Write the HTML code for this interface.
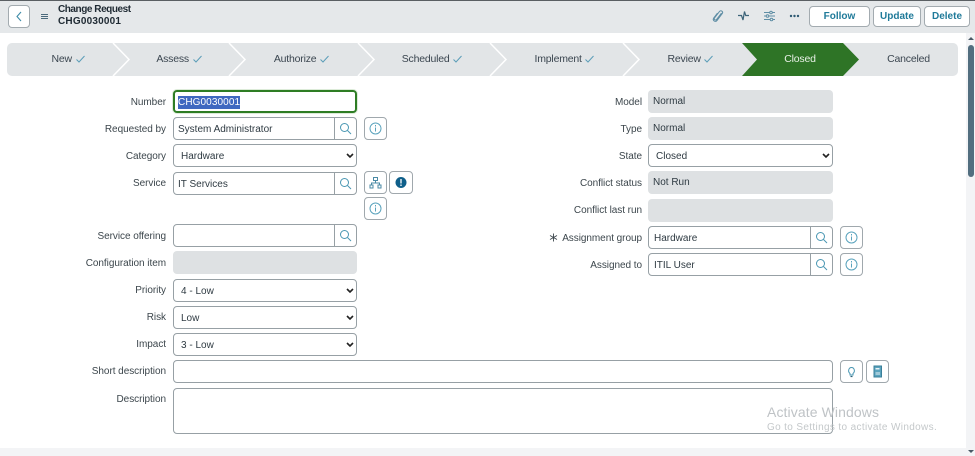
<!DOCTYPE html>
<html><head><meta charset="utf-8"><style>
html,body{margin:0;padding:0;background:#fff}
#p{position:relative;width:975px;height:456px;overflow:hidden;background:#fff;font-family:"Liberation Sans",sans-serif;font-size:10px;color:#2e3a42}
#p div,#p svg{position:absolute;box-sizing:border-box}
#p svg.c{position:static;vertical-align:-1px;margin-left:1px}
.l{text-align:right;line-height:16px;height:14px;white-space:nowrap;color:#3c464c;letter-spacing:-.05px}
.f{border:1px solid #97a0a5;border-radius:4px;height:23px;background:#fff;line-height:23px;padding-left:4px;white-space:nowrap;color:#2e3a42}
.r{background:#dee1e3;border:0;border-radius:4px;height:23px;line-height:23px;padding-left:5px;color:#2e3a42}
.s{padding-left:7px}
.b{border:1px solid #a0a8ad;border-radius:4px;width:23px;height:23px;background:#fff}
.st{top:43px;height:33px;line-height:33px;text-align:center;color:#3b4650;white-space:nowrap;font-size:10.500px;letter-spacing:-.2px}
.h{top:6px;height:21px;background:#fff;border:1px solid #a3abb0;border-radius:4px;color:#1f7a99;font-weight:bold;text-align:center;line-height:20px;font-size:10px}
</style></head><body><div id="p">
<div style="left:0;top:0;width:975px;height:33px;background:#e5e8ea"></div>
<div style="left:0;top:0;width:975px;height:1px;background:#5a5f63"></div>
<div style="left:8px;top:5px;width:22px;height:23px;background:#fff;border:1px solid #a3abb0;border-radius:4px"></div>
<svg style="left:8px;top:5px" width="22" height="23" fill="none" stroke="#3f8ca8" stroke-width="1.100"><path d="M13 7l-4 4.500 4 4.500"/></svg>
<svg style="left:40px;top:13px" width="9" height="7" fill="none" stroke="#4b6a7c"><path d="M1 1.500h7M1 3.500h7M1 5.500h7"/></svg>
<div style="left:58px;top:4px;font-weight:bold;font-size:10px;line-height:11.500px;color:#1f2a33;white-space:nowrap"><span style="letter-spacing:-.45px">Change Request</span><br><span style="letter-spacing:.2px">CHG0030001</span></div>

<svg style="left:711px;top:9px" width="13" height="14" fill="none" stroke="#5f8ea5" stroke-width="1"><path d="M10.500 4L5.500 10.500c-1 1.200-3 0-2-1.500L8.500 2.500c1.500-1.700 4 .2 2.800 2L6 11.500c-1.700 2-4.800 0-3.300-2.500L6.500 4"/></svg>
<svg style="left:737px;top:10px" width="13" height="12" fill="none" stroke="#3d6479" stroke-width="1.200"><path d="M1 5.500h3.500L6 10l1.500-8.500L8.700 5.500H12"/></svg>
<svg style="left:763px;top:10px" width="13" height="12" fill="none" stroke="#5f8ea5"><path d="M1 2.500h11M1 6h11M1 9.500h11"/><circle cx="8" cy="2.500" r="1.300" fill="#e5e8ea"/><circle cx="4.500" cy="6" r="1.300" fill="#e5e8ea"/><circle cx="8.500" cy="9.500" r="1.300" fill="#e5e8ea"/></svg>
<svg style="left:789px;top:14px" width="11" height="4" fill="#2f5a73"><circle cx="2" cy="2" r="1.200"/><circle cx="5.500" cy="2" r="1.200"/><circle cx="9" cy="2" r="1.200"/></svg>
<div class="h" style="left:809px;width:61px">Follow</div>
<div class="h" style="left:873px;width:48px">Update</div>
<div class="h" style="left:924px;width:46px">Delete</div>

<div style="left:7px;top:43px;width:951px;height:33px;background:#e2e5e7;border-radius:5px"></div>
<svg style="left:0;top:43px" width="975" height="33" fill="none" stroke="#fff" stroke-width="1.500"><path d="M113 0l16 16.500-16 16.500M229 0l16 16.500-16 16.500M358 0l16 16.500-16 16.500M490 0l16 16.500-16 16.500M623 0l16 16.500-16 16.500"/><path d="M742 0H843L859 16.500 843 33H742L757 16.500Z" fill="#2e7426" stroke="none"/></svg>
<div class="st" style="left:7px;width:122px">New <svg class="c" width="9" height="8" fill="none" stroke="#5b9db8"><path d="M.5 4.500l2.500 2.500 5.500-6"/></svg></div>
<div class="st" style="left:129px;width:100px">Assess <svg class="c" width="9" height="8" fill="none" stroke="#5b9db8"><path d="M.5 4.500l2.500 2.500 5.500-6"/></svg></div>
<div class="st" style="left:245px;width:113px">Authorize <svg class="c" width="9" height="8" fill="none" stroke="#5b9db8"><path d="M.5 4.500l2.500 2.500 5.500-6"/></svg></div>
<div class="st" style="left:374px;width:116px">Scheduled <svg class="c" width="9" height="8" fill="none" stroke="#5b9db8"><path d="M.5 4.500l2.500 2.500 5.500-6"/></svg></div>
<div class="st" style="left:506px;width:117px">Implement <svg class="c" width="9" height="8" fill="none" stroke="#5b9db8"><path d="M.5 4.500l2.500 2.500 5.500-6"/></svg></div>
<div class="st" style="left:639px;width:103px">Review <svg class="c" width="9" height="8" fill="none" stroke="#5b9db8"><path d="M.5 4.500l2.500 2.500 5.500-6"/></svg></div>
<div class="st" style="left:757px;width:86px;color:#e8f0e6">Closed</div>
<div class="st" style="left:859px;width:99px">Canceled</div>

<div class="l" style="left:60px;width:106px;top:95px">Number</div>
<div class="l" style="left:60px;width:106px;top:122px">Requested by</div>
<div class="l" style="left:60px;width:106px;top:149px">Category</div>
<div class="l" style="left:60px;width:106px;top:176px">Service</div>
<div class="l" style="left:60px;width:106px;top:229px">Service offering</div>
<div class="l" style="left:60px;width:106px;top:256px">Configuration item</div>
<div class="l" style="left:60px;width:106px;top:283px">Priority</div>
<div class="l" style="left:60px;width:106px;top:310px">Risk</div>
<div class="l" style="left:60px;width:106px;top:337px">Impact</div>
<div class="l" style="left:60px;width:106px;top:364px">Short description</div>
<div class="l" style="left:60px;width:106px;top:392px">Description</div>

<div style="left:172px;top:89px;width:186px;height:25px;border:1px solid #dcebd8;border-radius:5px"></div>
<div class="f" style="left:173px;top:90px;width:184px;border:2px solid #2e7d24;line-height:21px;padding-left:3px"><span style="background:#3f68c0;color:#fff;padding:1px 0;letter-spacing:.1px">CHG0030001</span></div>
<div class="f" style="left:173px;top:117px;width:184px">System Administrator</div>
<div class="f s" style="left:173px;top:144px;width:184px">Hardware</div>
<div class="f" style="left:173px;top:172px;width:184px">IT Services</div>
<div class="f" style="left:173px;top:224px;width:184px"></div>
<div class="r" style="left:173px;top:251px;width:184px"></div>
<div class="f s" style="left:173px;top:279px;width:184px">4 - Low</div>
<div class="f s" style="left:173px;top:306px;width:184px">Low</div>
<div class="f s" style="left:173px;top:333px;width:184px">3 - Low</div>
<div class="f" style="left:173px;top:360px;width:660px"></div>
<div class="f" style="left:173px;top:388px;width:660px;height:46px"></div>

<div class="l" style="left:530px;width:112px;top:95px">Model</div>
<div class="l" style="left:530px;width:112px;top:122px">Type</div>
<div class="l" style="left:530px;width:112px;top:149px">State</div>
<div class="l" style="left:530px;width:112px;top:176px">Conflict status</div>
<div class="l" style="left:530px;width:112px;top:203px">Conflict last run</div>
<div class="l" style="left:530px;width:112px;top:231px">Assignment group</div>
<div class="l" style="left:530px;width:112px;top:258px">Assigned to</div>
<svg style="left:549px;top:233px" width="9" height="9" fill="none" stroke="#3c464c" stroke-width=".9"><path d="M4.500 .5v8M1 2.500l7 4M8 2.500l-7 4"/></svg>

<div class="r" style="left:648px;top:90px;width:185px">Normal</div>
<div class="r" style="left:648px;top:117px;width:185px">Normal</div>
<div class="f s" style="left:648px;top:144px;width:185px">Closed</div>
<div class="r" style="left:648px;top:171px;width:185px">Not Run</div>
<div class="r" style="left:648px;top:199px;width:185px"></div>
<div class="f" style="left:648px;top:226px;width:185px;padding-left:5px">Hardware</div>
<div class="f" style="left:648px;top:253px;width:185px;padding-left:5px">ITIL User</div>

<div style="left:334px;top:117px;width:1px;height:23px;background:#97a0a5"></div>
<div style="left:334px;top:172px;width:1px;height:23px;background:#97a0a5"></div>
<div style="left:334px;top:224px;width:1px;height:23px;background:#97a0a5"></div>
<div style="left:810px;top:226px;width:1px;height:23px;background:#97a0a5"></div>
<div style="left:810px;top:253px;width:1px;height:23px;background:#97a0a5"></div>

<svg style="left:339px;top:122px" width="13" height="13" fill="none" stroke="#4a97b3" stroke-width="1"><circle cx="5.500" cy="5.500" r="4"/><path d="M8.500 8.500L12 12"/></svg>
<svg style="left:339px;top:177px" width="13" height="13" fill="none" stroke="#4a97b3" stroke-width="1"><circle cx="5.500" cy="5.500" r="4"/><path d="M8.500 8.500L12 12"/></svg>
<svg style="left:339px;top:229px" width="13" height="13" fill="none" stroke="#4a97b3" stroke-width="1"><circle cx="5.500" cy="5.500" r="4"/><path d="M8.500 8.500L12 12"/></svg>
<svg style="left:815px;top:231px" width="13" height="13" fill="none" stroke="#4a97b3" stroke-width="1"><circle cx="5.500" cy="5.500" r="4"/><path d="M8.500 8.500L12 12"/></svg>
<svg style="left:815px;top:258px" width="13" height="13" fill="none" stroke="#4a97b3" stroke-width="1"><circle cx="5.500" cy="5.500" r="4"/><path d="M8.500 8.500L12 12"/></svg>

<svg style="left:346px;top:153px" width="8" height="6" fill="none" stroke="#222" stroke-width="1.600"><path d="M1 1l3 3 3-3"/></svg>
<svg style="left:346px;top:288px" width="8" height="6" fill="none" stroke="#222" stroke-width="1.600"><path d="M1 1l3 3 3-3"/></svg>
<svg style="left:346px;top:315px" width="8" height="6" fill="none" stroke="#222" stroke-width="1.600"><path d="M1 1l3 3 3-3"/></svg>
<svg style="left:346px;top:342px" width="8" height="6" fill="none" stroke="#222" stroke-width="1.600"><path d="M1 1l3 3 3-3"/></svg>
<svg style="left:822px;top:153px" width="8" height="6" fill="none" stroke="#222" stroke-width="1.600"><path d="M1 1l3 3 3-3"/></svg>

<div class="b" style="left:364px;top:117px"></div>
<svg style="left:364px;top:117px" width="23" height="23" fill="none" stroke="#5aa3bd"><circle cx="11.500" cy="11.500" r="5.500"/><path d="M11.500 10.500v4M11.500 8v1.500"/></svg>
<div class="b" style="left:364px;top:171px"></div>
<svg style="left:364px;top:171px" width="23" height="23" fill="none" stroke="#4a8aa5"><path d="M9.500 6.500h4v3h-4zM11.500 9.500v2.500M7.500 14v-2h8v2M6 14h3v3H6zM14 14h3v3h-3z"/></svg>
<div class="b" style="left:389px;top:171px;width:24px"></div>
<svg style="left:389px;top:171px" width="24" height="23"><circle cx="12" cy="11.500" r="5.500" fill="#0f5f8a"/><path d="M12 8v4.500M12 13.500v1.500" stroke="#fff" stroke-width="1.300"/></svg>
<div class="b" style="left:364px;top:197px"></div>
<svg style="left:364px;top:197px" width="23" height="23" fill="none" stroke="#5aa3bd"><circle cx="11.500" cy="11.500" r="5.500"/><path d="M11.500 10.500v4M11.500 8v1.500"/></svg>

<div class="b" style="left:840px;top:226px"></div>
<svg style="left:840px;top:226px" width="23" height="23" fill="none" stroke="#5aa3bd"><circle cx="11.500" cy="11.500" r="5.500"/><path d="M11.500 10.500v4M11.500 8v1.500"/></svg>
<div class="b" style="left:840px;top:253px"></div>
<svg style="left:840px;top:253px" width="23" height="23" fill="none" stroke="#5aa3bd"><circle cx="11.500" cy="11.500" r="5.500"/><path d="M11.500 10.500v4M11.500 8v1.500"/></svg>
<div class="b" style="left:840px;top:360px"></div>
<svg style="left:840px;top:360px" width="23" height="23" fill="none" stroke="#4a97b3"><path d="M10 13.500c-2.500-2-1.300-6 1.500-6s4 4 1.500 6v1.500h-3z"/><path d="M10.500 16.500h2" stroke="#2a5f75" stroke-width="1.200"/></svg>
<div class="b" style="left:866px;top:360px"></div>
<svg style="left:866px;top:360px" width="23" height="23"><path d="M8 6h7.500v11H8z" fill="#5aa3bd" stroke="#3a7f99"/><path d="M9.500 8h4v1.500h-4z" fill="#e8f2f6"/><path d="M9.500 12h4.500v3H9.500z" fill="#e8f2f6" opacity=".5"/></svg>

<div style="left:767px;top:403px;font-size:14px;line-height:18px;color:#bfc3c6;white-space:nowrap;letter-spacing:.1px">Activate Windows</div>
<div style="left:767px;top:421px;font-size:10px;line-height:14px;color:#c4c8ca;white-space:nowrap;letter-spacing:.35px">Go to Settings to activate Windows.</div>

<div style="left:966px;top:33px;width:9px;height:423px;background:#f3f4f6"></div>
<div style="left:0;top:448px;width:975px;height:8px;background:#f3f4f6"></div>
<div style="left:968px;top:45px;width:6px;height:132px;background:#526e7f;border-radius:3px"></div>
<svg style="left:967px;top:36px" width="8" height="5" fill="#4a5a66"><path d="M1 4l3-3 3 3z"/></svg>
<svg style="left:967px;top:449px" width="8" height="5" fill="#4a5a66"><path d="M1 1l3 3 3-3z"/></svg>
</div></body></html>
